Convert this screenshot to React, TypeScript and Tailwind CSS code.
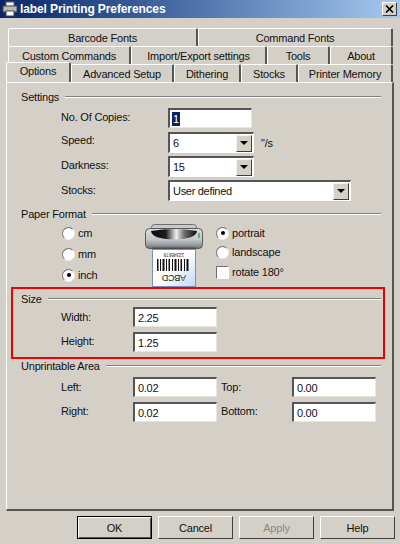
import React from "react";

const font = "font-['Liberation_Sans',Arial,sans-serif] text-[11px] tracking-[-0.2px] leading-[14px] text-[#111]";

function Header({ label, className = "" }: { label: string; className?: string }) {
  return (
    <div className={`flex items-center h-[14px] ${className}`}>
      <span className="mr-[6px] whitespace-nowrap">{label}</span>
      <div className="flex-1 h-[2px] border-t border-t-[#808080] border-b border-b-white" />
    </div>
  );
}

function Field({ value, selected = false, className = "" }: { value: string; selected?: boolean; className?: string }) {
  return (
    <div className={`h-[20px] w-[84px] bg-white border-t-2 border-l-2 border-t-[#555] border-l-[#555] border-b border-r border-b-[#e8e6e0] border-r-[#e8e6e0] pl-[2px] flex items-center tracking-[-0.3px] ${className}`}>
      {selected ? <span className="bg-[#0a246a] text-white px-[1px]">{value}</span> : <span className="pl-[1px]">{value}</span>}
    </div>
  );
}

function Combo({ value, className = "" }: { value: string; className?: string }) {
  return (
    <div className={`h-[21px] bg-white border-t-2 border-l-2 border-t-[#555] border-l-[#555] border-b border-r border-b-white border-r-white flex items-center pl-[2px] ${className}`}>
      <span className="flex-1 pl-[1px] tracking-[-0.3px]">{value}</span>
      <div className="h-[17px] w-[16px] mr-[1px] bg-[#d4d0c8] border border-t-[#f4f2ee] border-l-[#f4f2ee] border-b-[#404040] border-r-[#404040] flex items-center justify-center">
        <div className="w-0 h-0 border-l-[4px] border-r-[4px] border-t-[4px] border-l-transparent border-r-transparent border-t-black" />
      </div>
    </div>
  );
}

function Radio({ checked = false }: { checked?: boolean }) {
  return (
    <div className="w-[13px] h-[13px] rounded-full bg-white border border-t-[#707070] border-l-[#707070] border-b-[#eee] border-r-[#eee] flex items-center justify-center shrink-0">
      {checked && <div className="w-[4px] h-[4px] rounded-full bg-black" />}
    </div>
  );
}

function RadioRow({ label, checked, gap }: { label: string; checked?: boolean; gap: string }) {
  return (
    <div className={`flex items-center h-[14px] ${gap}`}>
      <Radio checked={checked} />
      <span>{label}</span>
    </div>
  );
}

function Tab({ label, w, active = false }: { label: string; w: string; active?: boolean }) {
  return (
    <div
      className={`${w} flex items-center justify-center shrink-0 border-t border-l border-t-white border-l-white border-r-2 border-r-[#555] rounded-t-[2px] bg-[#d4d0c8] ${
        active ? "h-[20px] -mt-[2px] relative z-10 pb-[3px]" : "h-[18px]"
      }`}
    >
      {label}
    </div>
  );
}

function PrinterIcon() {
  return (
    <svg width="60" height="63" viewBox="0 0 60 63" className="shrink-0">
      <defs>
        <linearGradient id="body" x1="0" y1="0" x2="0" y2="1">
          <stop offset="0" stopColor="#d8dadb" />
          <stop offset="0.55" stopColor="#c4c7c9" />
          <stop offset="0.8" stopColor="#9a9ea1" />
          <stop offset="1" stopColor="#6c7073" />
        </linearGradient>
        <linearGradient id="slot" x1="0" y1="0" x2="1" y2="0">
          <stop offset="0" stopColor="#0a0a0a" />
          <stop offset="0.32" stopColor="#1c1c1c" />
          <stop offset="0.55" stopColor="#f0f0f0" />
          <stop offset="0.72" stopColor="#707070" />
          <stop offset="1" stopColor="#0a0a0a" />
        </linearGradient>
        <linearGradient id="paper" x1="0" y1="0" x2="1" y2="1">
          <stop offset="0.5" stopColor="#ffffff" />
          <stop offset="1" stopColor="#bcd8f5" />
        </linearGradient>
      </defs>
      <rect x="6.5" y="0.5" width="45" height="8" rx="3" fill="#c8cacb" stroke="#6d7072" />
      <rect x="0.5" y="4.5" width="57" height="20" rx="4" fill="url(#body)" stroke="#555a5e" />
      <path d="M6 7 Q29 3 52 7 Q51 15 29 15.5 Q7 15 6 7 Z" fill="url(#slot)" />
      <rect x="53" y="9" width="2" height="5" fill="#5fb85f" />
      <rect x="7" y="23.5" width="44" height="2" fill="#4c4f52" />
      <rect x="7.5" y="25.5" width="43" height="37" fill="url(#paper)" stroke="#7c8fb8" />
      <text transform="rotate(180 29 30)" x="29" y="30" dominantBaseline="middle" textAnchor="middle" fontSize="5" fontFamily="'Liberation Sans',sans-serif" fill="#333">12345678</text>
      <g fill="#111">
        <rect x="12" y="35" width="1.5" height="12" />
        <rect x="15" y="35" width="1" height="12" />
        <rect x="17.5" y="35" width="2" height="12" />
        <rect x="21" y="35" width="1" height="12" />
        <rect x="23.5" y="35" width="1.5" height="12" />
        <rect x="27" y="35" width="1" height="12" />
        <rect x="29.5" y="35" width="2" height="12" />
        <rect x="33" y="35" width="1" height="12" />
        <rect x="35.5" y="35" width="1.5" height="12" />
        <rect x="39" y="35" width="1" height="12" />
        <rect x="41.5" y="35" width="2" height="12" />
      </g>
      <text transform="rotate(180 29 53)" x="29" y="53" dominantBaseline="middle" textAnchor="middle" fontSize="9" fontFamily="'Liberation Sans',sans-serif" fill="#222">ABCD</text>
    </svg>
  );
}

function Button({ label, cls = "", disabled = false, def = false }: { label: string; cls?: string; disabled?: boolean; def?: boolean }) {
  return (
    <div
      className={`w-[75px] h-[23px] flex items-center justify-center bg-[#d4d0c8] ${
        def
          ? "border border-black shadow-[inset_1px_1px_0_#fff,inset_-1px_-1px_0_#555]"
          : "border border-t-white border-l-white border-b-[#404040] border-r-[#404040]"
      } ${disabled ? "text-[#8c8a84]" : ""} ${cls}`}
    >
      {label}
    </div>
  );
}

export default function App() {
  return (
    <div className={`w-[400px] h-[544px] overflow-hidden bg-[#d4d0c8] flex flex-col ${font}`}>
      <div className="h-[18px] shrink-0 flex items-center bg-gradient-to-r from-[#0a246a] to-[#a6caf0]">
        <svg width="16" height="16" viewBox="0 0 16 16" className="ml-[2px] shrink-0">
          <rect x="4" y="1" width="8" height="5" fill="#f0f0f0" stroke="#666" />
          <rect x="1" y="5" width="14" height="6" fill="#b8b8b8" stroke="#444" />
          <rect x="4" y="10" width="8" height="5" fill="#fff" stroke="#444" />
        </svg>
        <span className="ml-[2px] text-[12px] tracking-[-0.1px] font-bold text-white">label Printing Preferences</span>
        <div className="ml-auto mr-[3px] w-[15px] h-[14px] bg-[#d4d0c8] border border-t-white border-l-white border-b-[#404040] border-r-[#404040] flex items-center justify-center">
          <svg width="9" height="8" viewBox="0 0 9 8">
            <path d="M1 0.5 L8 7.5 M8 0.5 L1 7.5" stroke="#000" strokeWidth="1.6" />
          </svg>
        </div>
      </div>

      <div className="mt-[10px] pl-[8px] flex flex-col">
        <div className="flex h-[18px]">
          <Tab label="Barcode Fonts" w="w-[190px]" />
          <Tab label="Command Fonts" w="w-[195px]" />
        </div>
        <div className="flex h-[18px]">
          <Tab label="Custom Commands" w="w-[123px]" />
          <Tab label="Import/Export settings" w="w-[136px]" />
          <Tab label="Tools" w="w-[63px]" />
          <Tab label="About" w="w-[63px]" />
        </div>
        <div className="flex h-[18px] -ml-[2px]">
          <Tab label="Options" w="w-[65px]" active />
          <Tab label="Advanced Setup" w="w-[103px]" />
          <Tab label="Dithering" w="w-[67px]" />
          <Tab label="Stocks" w="w-[57px]" />
          <Tab label="Printer Memory" w="w-[95px]" />
        </div>
      </div>

      <div className="ml-[6px] w-[388px] h-[429px] shrink-0 border-t border-l border-t-white border-l-white border-b-2 border-r-2 border-b-[#555] border-r-[#555] flex flex-col">
        <Header label="Settings" className="ml-[14px] w-[360px] mt-[7px]" />
        <div className="ml-[54px] mt-[4px] flex items-center">
          <span className="w-[107px] mb-[2px]">No. Of Copies:</span>
          <Field value="1" selected />
        </div>
        <div className="ml-[54px] mt-[4px] flex items-center">
          <span className="w-[107px] mb-[6px]">Speed:</span>
          <Combo value="6" className="w-[86px]" />
          <span className="ml-[7px]">"/s</span>
        </div>
        <div className="ml-[54px] mt-[3px] flex items-center">
          <span className="w-[107px] mb-[4px]">Darkness:</span>
          <Combo value="15" className="w-[86px]" />
        </div>
        <div className="ml-[54px] mt-[3px] flex items-center">
          <span className="w-[107px] mb-[2px]">Stocks:</span>
          <Combo value="User defined" className="w-[183px]" />
        </div>

        <Header label="Paper Format" className="ml-[14px] w-[360px] mt-[6px]" />
        <div className="h-[66px] flex items-start">
          <div className="ml-[55px] w-[83px] mt-[5px] flex flex-col gap-[7px]">
            <RadioRow label="cm" gap="gap-[3px]" />
            <RadioRow label="mm" gap="gap-[3px]" />
            <RadioRow label="inch" checked gap="gap-[3px]" />
          </div>
          <div className="mt-[3px]"><PrinterIcon /></div>
          <div className="ml-[11px] mt-[5px] flex flex-col gap-[5px]">
            <RadioRow label="portrait" checked gap="gap-[3px]" />
            <RadioRow label="landscape" gap="gap-[3px]" />
            <div className="flex items-center gap-[3px] h-[14px] mt-[1px]">
              <div className="w-[13px] h-[13px] bg-white border border-t-[#707070] border-l-[#707070] border-b-white border-r-white" />
              <span>rotate 180°</span>
            </div>
          </div>
        </div>

        <div className="ml-[4px] w-[374px] h-[72px] shrink-0 border-2 border-[#ee0000] pl-[8px] pr-[2px] pt-[2px]">
          <Header label="Size" className="pt-[1px]" />
          <div className="ml-[40px] mt-[2px] flex items-center">
            <span className="w-[72px]">Width:</span>
            <Field value="2.25" />
          </div>
          <div className="ml-[40px] mt-[5px] flex items-center">
            <span className="w-[72px] mb-[2px]">Height:</span>
            <Field value="1.25" />
          </div>
        </div>

        <Header label="Unprintable Area" className="ml-[14px] w-[360px]" />
        <div className="ml-[54px] mt-[4px] flex items-center">
          <span className="w-[72px]">Left:</span>
          <Field value="0.02" />
          <span className="w-[71px] ml-[4px]">Top:</span>
          <Field value="0.00" />
        </div>
        <div className="ml-[54px] mt-[5px] flex items-center">
          <span className="w-[72px] mb-[2px]">Right:</span>
          <Field value="0.02" />
          <span className="w-[71px] ml-[4px] mb-[2px]">Bottom:</span>
          <Field value="0.00" />
        </div>
      </div>

      <div className="mt-[5px] ml-[77px] flex gap-[6px]">
        <Button label="OK" def />
        <Button label="Cancel" />
        <Button label="Apply" disabled />
        <Button label="Help" />
      </div>
    </div>
  );
}
